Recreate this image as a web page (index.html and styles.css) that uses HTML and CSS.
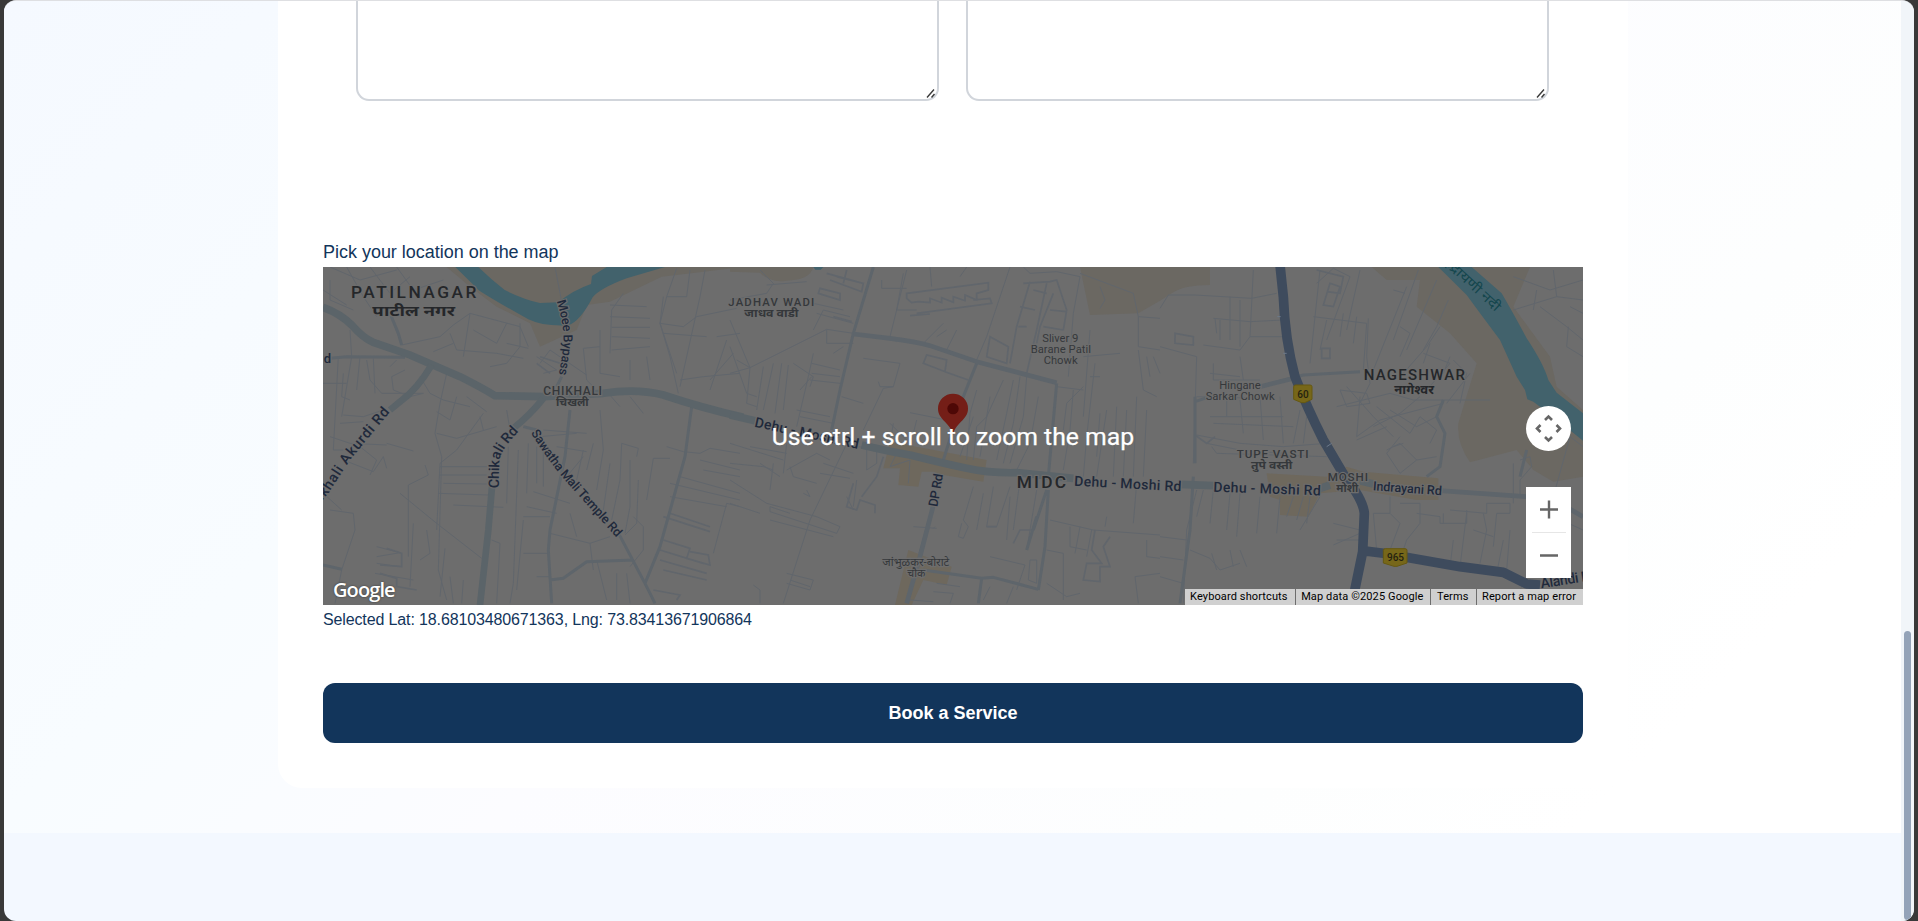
FILE: index.html
```html
<!DOCTYPE html>
<html lang="en">
<head>
<meta charset="utf-8">
<title>Book a Service</title>
<link rel="stylesheet" href="styles.css">
</head>
<body>
<div class="window">
  <main class="page">
    <section class="booking">
      <form class="card">
        <div class="fields">
          <div class="textarea"><svg class="grip" viewBox="0 0 10 10"><path d="M1 9.5 L8 1.5 M5.5 9.5 L8.5 6"/></svg></div>
          <div class="textarea"><svg class="grip" viewBox="0 0 10 10"><path d="M1 9.5 L8 1.5 M5.5 9.5 L8.5 6"/></svg></div>
        </div>
        <div class="label">Pick your location on the map</div>
        <div class="map">
          <svg class="tiles" viewBox="0 0 3780 1014">
            <!-- west -->
            <g transform="translate(-39,-111)">
              <path class="sand" d="M410 111 L1300 111 L1055 140 L900 215 L830 225 L800 300 L690 350 L660 280 L560 230 L480 170 Z"/>
              <path class="water" d="M436 111 L505 111 Q545 150 584 180 Q640 208 690 219 L745 217 Q790 180 843 162 L846 138 L890 111 L1065 111 L950 145 Q870 175 848 202 Q810 275 775 286 Q700 290 655 268 Q560 215 508 182 Z"/>
              <g class="lane">
                <path d="M60 111L150 150L260 120M110 111L160 200L200 260M180 111L240 190L300 140M260 111L310 180L400 150M60 150L60 210L130 240M240 250L275 345L390 320L430 285L480 250L630 290L655 350M39 180L110 225M420 310L440 360L560 370L640 385M490 300L560 340L590 280M370 365L430 340M480 250L460 380M630 280L630 350L590 400L540 410M590 340L655 355"/>
                <path d="M85 380L70 660L100 660M120 300L125 380L95 560M100 430L95 500L120 510M150 380L140 480M190 385L195 490M170 390L180 450L215 490L340 490M39 460L110 460M100 555L160 560L220 540M90 580L160 575M60 620L120 640L230 645M150 650L200 690L180 735M230 640L310 663M100 690L190 725L220 680L230 715M60 840L130 850L135 900L95 1020L75 1120M40 790L95 840"/>
                <path d="M240 410L260 390M285 420L245 440L250 480L300 500L340 490M330 440L360 490L400 510L480 530M410 430L390 520L375 610L395 680L385 1020L410 1110M440 500L420 570L380 545M520 550L440 660L390 700L380 900M470 500L530 545M380 610L440 625L560 590M345 705L355 735L295 765L295 980M270 790L380 880L515 985M390 710L530 710M388 735L530 735M385 790L535 795M400 760L530 762M430 825L580 832M200 950L270 968L200 980M200 1000L270 1010M195 1030L310 1050M310 880L300 1070M350 900L360 970L330 990M405 955L390 1100M420 1040L430 1120M460 1050L455 1120M545 930L570 940L560 1120M595 650L590 820M625 660L610 1060L600 1120M640 870L620 1080M655 640L650 790M680 650L680 760M700 660L700 770M590 540L600 600M510 560L520 600"/>
                <path d="M735 111L755 215M680 380L740 420L700 430M690 400L720 360L830 435M820 355L830 450L850 470M940 190L905 240L900 370M900 225L1010 230M900 260L1020 265M905 292L1020 292M905 320L1020 325M905 360L1020 350M870 300L870 430L930 440M820 355L870 350M960 390L960 450M1010 380L1020 450M895 490L930 530M960 500L1000 550M1100 115L1070 200L1050 280L1080 380L1105 490M1050 280L1120 290L1160 260L1280 235M1185 120L1170 200L1110 470M1060 310L1190 320M1140 120L1130 200L1070 200M1220 320L1290 310M1250 330L1200 480M1060 200L1050 280L1100 430M1270 370L1200 450M1110 450L1180 440L1290 430"/>
                <path d="M700 600L830 610M740 650L830 665M690 620L800 610M820 660L800 750M850 640L830 720M870 540L880 660L860 780M935 640L930 750L905 870M935 640L985 655L980 680M900 700L880 840M960 690L960 830L945 910M985 750L980 880L945 915M1030 685L1010 810M1030 685L1080 685M1070 650L1120 665L1170 670L1200 655L1290 670M1170 690L1290 720M1180 720L1290 740M1110 740L1290 790M1080 760L1290 810M1080 800L1250 830M1290 830L1250 820L1210 970M670 785L780 820M650 830L740 850M640 860L720 860M720 910L840 940L900 920M780 850L800 920M640 970L720 970M840 940L850 1020M860 990L890 1110M970 860L1000 890L1000 960L960 1010M680 1040L720 1040M920 1030L920 1110M950 1030L960 1120M820 680L770 740"/>
                <path class="thick" d="M1060 860L1200 905M1080 850L1200 890M1060 930L1140 955L1130 985L1200 1005L1195 975L1140 965M1050 960L1180 1000M1050 990L1190 1030M1060 1020L1190 1050M1030 1080L1110 1095L1100 1110M230 955L275 970L275 1010L210 1005M210 1030L260 1045L260 1070L320 1080M680 400L720 430M690 380L750 400"/>
              </g>
              <g class="street">
                <path d="M60 385L110 380L285 382M780 540L765 680L720 900L715 960L725 1120M1145 530L1125 680L1050 950L1005 1060M720 1050L760 1045L830 995L970 990M910 880L1005 1060L1035 1120M39 1005L95 1018M755 440L740 470M640 590L680 600M240 250L265 310L275 345"/>
              </g>
              <path class="road" d="M39 232Q90 250 125 285Q160 325 190 337L300 375Q380 410 450 440Q510 470 555 497L700 500L880 490Q980 475 1060 495Q1180 535 1300 562"/>
              <path class="road side" d="M365 405Q320 480 270 515L240 540M700 505Q660 555 610 595M546 770L535 900L510 1125"/>
            </g>
            <!-- centre -->
            <g transform="translate(1221,-111)">
              <path class="sand" d="M0 111H250Q240 150 170 152Q120 160 90 128L0 125ZM1050 111H1440V165Q1360 165 1325 190L1290 212L1225 250L1080 255Z"/>
              <path class="biz" d="M480 635L770 690L760 755L640 735L610 725L575 725L565 770L505 765L510 715L460 715ZM535 960L665 1010L650 1065L580 1050L545 1125H495Z"/>
              <path class="water" d="M250 111H280L272 119H256Z"/>
              <g class="lane">
                <path d="M60 413L290 298L370 310M90 120L130 160L110 190L0 210M20 390L60 413L0 430M0 270L60 413M0 350L50 490L80 500M60 413L50 520L80 530M100 410L80 540M130 400L100 540M155 400L135 550M175 405L160 540M250 370L235 440L200 590M245 400L330 420M245 430L330 440M240 450L330 460M200 540L300 560M210 560L310 580M190 400L250 440L240 470M290 300L290 340L370 340M310 370L340 350M250 300L280 240L360 260M260 250L370 280M250 220L340 240M110 165L230 155M245 440L210 480M335 500L400 520M400 385L510 400L490 470L450 470L445 455M490 470L460 475L400 600"/>
                <path d="M530 120L480 320L500 335M600 111L605 170M710 111L690 140M455 150L455 175L530 175M520 130L500 240L560 240M840 111L770 320L740 390M880 111L900 130L980 125L1050 140L1030 250L1015 440M1110 170L1125 210L1110 235M1050 130L1210 190L1225 260L1290 265M1225 260L1225 350L1290 360M1225 360L1240 480L1280 500M1250 380L1260 440M1270 380L1290 430M1080 300L1060 560M1060 380L1170 370M1095 400L1070 620L1060 740M1080 440L1110 440M1060 480L980 470M1110 550L1100 680M1030 480L1020 600L1000 720M1060 470L1010 520L1000 600M1130 540L1100 740M1160 530L1150 740M1190 540L1180 740M1220 500L1210 740M1250 540L1240 740"/>
                <path d="M820 450L770 560L750 680M850 450L830 550L800 690M870 440L850 580L820 700M890 440L880 560L840 700M780 500L770 560L740 590L730 690M740 480L720 550L710 690M730 560L690 680M925 500L900 640L860 720M540 548L650 570M530 630L480 580M680 300L650 360M640 280L580 340M650 300L620 320M560 570L550 610M490 580L480 640M0 700L100 710L130 720M0 640L160 690M60 650L170 670M90 700L150 740M130 700L120 780M170 640L160 730M280 700L370 730M270 730L360 745M180 710L190 740L260 760M170 720L260 670L300 690M380 650L500 660M410 660L410 720L440 700L440 650M500 670L480 710L540 690M540 690L535 760M380 750L370 830M350 800L370 840M220 790L240 800L230 780"/>
                <path d="M370 600L240 870L160 1120M0 820L90 850M0 750L110 820L260 860L330 890L320 910L120 845L120 830L180 850M120 870L310 920M170 1030L250 1050L240 1080L170 1060M180 1050L240 1070M70 1065L90 1080L90 1120M780 980L885 1005L860 1080M730 770L700 870L715 890L700 925L685 920L695 880M760 790L740 900M790 770L770 890L800 890L840 770M840 800L830 930M870 750L850 900M920 780L890 960M550 890L620 895M610 895L615 890M960 870L1090 900L1290 915M1020 890L1020 950M1050 890L1035 970M1085 900L1070 980M1020 950L1070 960M1130 860L1125 890M1220 760L1210 880M1250 930L1250 980L1290 985M1215 1040L1225 1120M1290 1030L1215 1040M950 960L1000 970L1000 1110M950 1060L1010 1100L1050 1090M900 990L920 990L920 1060L895 1050ZM610 1085L670 1090L660 1120M620 1060L690 1070M540 1110L610 1115M780 1070L760 1110M850 1070L830 1120"/>
                <path class="thick" d="M530 190L775 158L775 180L740 190L740 210L705 195L705 212L670 200L670 217L635 203L635 218L600 205L600 218L565 215L545 218L530 205ZM560 250L785 220L780 205L730 210M540 257L600 252M780 320L835 350L830 400L770 380ZM580 400L590 375L650 390L645 425ZM645 425L715 450M880 160L960 155L980 150L1010 240L1000 300M900 155L860 290L840 400M950 160L920 300L890 430M970 190L930 290L920 340M870 230L915 240M865 290L890 290M910 180L950 190M960 240L1010 245M940 290L1000 300M265 190L330 210L330 190L270 175ZM300 150L395 185L400 160L320 140M290 130L380 155M350 120L340 160M310 260L365 275M370 760L350 830L380 840L390 810L435 825L435 850M395 800L440 740L460 680M1095 900L1085 960L1115 1000L1070 1000L1060 1050L1110 1055L1110 1010L1140 1010L1120 950L1140 920M850 940L870 900L910 900M770 890L800 890"/>
              </g>
              <g class="street">
                <path d="M430 111L370 310L330 480L305 600M740 400L700 500L640 690M980 460L955 740M955 780L945 950L925 1080M610 830L570 970M580 1020L755 1045L790 1042L925 1078M755 1045L745 1120M920 860L890 960M910 900L950 780"/>
                <path class="street-wide" d="M370 312L480 325Q560 335 600 347L740 395L980 458M609 830L570 980L530 1120"/>
              </g>
              <path class="road" d="M0 555L75 572M395 645Q480 665 540 675Q640 700 710 715T860 728L1030 745"/>
            </g>
            <!-- east -->
            <g transform="translate(2511,-111)">
              <path class="sand" d="M635 111H1110L1060 230L1170 380L1190 470L1269 540V740L1180 755L1120 720L1070 660L930 697Q890 640 895 580L950 400L870 310L770 230L780 150L680 150Z"/>
              <path class="biz" d="M320 730L500 740L560 710L610 725L835 745L835 810L770 810L600 780L480 790L445 860L360 855L360 810L330 800Z"/>
              <path class="water" d="M835 111H935L1025 190Q1060 250 1100 325Q1150 400 1165 450L1190 488L1269 550V632L1180 560L1120 515L1102 508L1095 480L1070 440L1020 330Q960 250 920 195Z"/>
              <g class="lane">
                <path d="M0 235L25 195L105 195L275 205L350 190M280 120L270 320M160 265L270 275L370 270M165 265L170 310M180 270L180 330M130 345L240 360L270 320L370 320M210 200L210 330M240 210L240 350M0 350L110 380L100 700M240 380L250 450M160 400L160 450L300 450M150 430L240 440M110 500L300 505M200 500L200 560M240 510L250 610M300 500L310 630M150 560L370 560M160 580L400 590M360 500L370 640M420 540L400 640M440 560L430 640M480 120L450 400M470 160L520 115L570 140L500 330M600 120L560 300M460 260L620 280L610 420M500 270L480 360M550 250L540 320M590 260L580 340M625 265L620 380M740 170L640 420M775 120L700 330M830 150L740 360M865 210L830 290L790 360M700 180L735 190M620 380L630 460L600 520M720 290L750 310L720 380M840 290L800 350L730 430M790 370L870 400L800 480M870 380L850 430M810 340L790 400M880 390L920 430L900 520M930 430L860 520"/>
                <path d="M540 480L620 490L630 520L560 530ZM560 470L640 560L700 620M530 530L690 490L760 510L990 510M600 500L590 620L660 570L850 520M650 530L750 610L780 560M690 540L770 590L830 560M640 590L720 550L780 500M590 630L680 590M780 560L830 600L810 640M720 620L680 670L720 730L770 690L720 640L680 660M700 650L730 640M770 690L830 680M110 615L240 640L370 650L500 640M140 640L240 660L370 670M155 650L170 670L500 680M110 780L80 900L70 1120M0 920L80 930M0 1040L70 1060M0 980L70 990M130 780L110 860M160 780L150 880M210 790L200 900M240 790L230 920M300 800L290 910M360 800L350 910M400 800L380 860M430 800L410 870M450 800L440 880M480 800L420 900M90 960L150 985L180 1020L240 1000M155 970L170 1020M210 960L220 1010M240 960L260 1010M520 880L600 900M530 930L600 930M520 945L600 910"/>
                <path d="M690 800L690 850L640 850M690 850L720 880L690 960M720 820L780 820L780 880L740 930L730 960M640 850L650 960M770 850L840 860L840 880L920 880L920 840M850 850L850 880M870 840L980 850L980 820L1050 820L1050 850L1010 850L1000 950M970 850L980 900L960 1000M920 850L900 1010M880 930L870 1010M1030 930L1010 1030M1050 900L1040 1020M940 900L1000 920M1080 690L1110 680L1115 710L1080 750L1080 800M1060 700L1060 820M1200 650L1230 620L1269 650M1230 620L1180 800M1060 140L1170 180L1269 150M1180 120L1190 200L1060 240M1130 180L1120 240M1190 200L1269 210M1140 230L1220 290L1269 330M1225 290L1220 350L1269 380M1230 230L1269 250M1080 1080L1160 940M1160 850L1269 900"/>
                <path class="thick" d="M45 310L100 320L100 345L45 340ZM510 160L540 170L520 230L490 225ZM485 355L510 355L510 385L485 385ZM105 615L140 640L165 620M470 120L550 140L540 190L500 185"/>
              </g>
              <g class="street">
                <path d="M105 500L105 700M300 470L430 435L600 425M850 510L830 560L855 610L840 710L800 740M60 1120L90 900L100 740M105 515L150 500M1100 660L1080 740"/>
                <path class="street-wide" d="M300 470L420 440M840 782L1100 800M1200 820L1269 860"/>
              </g>
              <path class="road" d="M60 763L160 767M480 775L510 765M600 752L640 762"/>
              <path class="highway" d="M360 105L370 200Q375 330 405 440Q440 530 490 630L555 740Q610 810 613 850L608 965L575 1125M610 962L670 970L900 1010L1030 1027L1100 1062L1140 1065"/>
              <path class="lines" d="M500 650L515 640M352 260H362M370 370H380"/>
              <path class="shield" d="M401 470q0-5 6-5h43q6 0 6 5v38l-22 10h-9l-24-10zM670 961q0-5 6-5h59q6 0 6 5v38l-30 10h-9l-32-10z"/>
            </g>
            <g transform="translate(-39,-111)" class="town">
              <text x="123" y="205" font-size="52" textLength="376">PATILNAGAR</text>
              <text class="hindi" x="187" y="257" font-size="42" textLength="248" lengthAdjust="spacingAndGlyphs">पाटील नगर</text>
              <text class="dim" x="700" y="496" font-size="36" textLength="176">CHIKHALI</text>
              <text class="dim hindi" x="738" y="527" font-size="33" textLength="98" lengthAdjust="spacingAndGlyphs">चिखली</text>
              <text class="dim" x="1255" y="227" font-size="34" textLength="258">JADHAV WADI</text>
              <text class="dim hindi" x="1303" y="261" font-size="33" textLength="162" lengthAdjust="spacingAndGlyphs">जाधव वाडी</text>
              <text class="street-name" x="41" y="399" font-size="39">d</text>
            </g>
            <g transform="translate(-39,-111)" class="street-name">
              <path id="moee" class="guide" d="M740 214Q768 300 758 360Q753 400 746 438"/>
              <path id="akurdi" class="guide" d="M36 812L55 790L120 690L245 540"/>
              <path id="chikali" class="guide" d="M566 775L568 690Q575 655 635 595"/>
              <path id="sawatha" class="guide" d="M662 608Q713 692 768 754T928 932"/>
              <text font-size="38"><textPath href="#moee" textLength="222">Moee Bypass</textPath></text>
              <text font-size="43"><textPath href="#akurdi" textLength="336">ikhali Akurdi Rd</textPath></text>
              <text font-size="43"><textPath href="#chikali" textLength="190">Chikali Rd</textPath></text>
              <text font-size="38"><textPath href="#sawatha" textLength="408">Sawatha Mali Temple Rd</textPath></text>
            </g>
            <g transform="translate(1221,-111)">
              <path id="dehu" class="guide" d="M72 590L385 657"/>
              <text class="street-name" font-size="42"><textPath href="#dehu" textLength="318">Dehu - Moshi Rd</textPath></text>
              <text class="street-name" font-size="39" textLength="100" transform="translate(622,832) rotate(-80)">DP Rd</text>
              <text class="street-name" font-size="42" textLength="322" transform="translate(1032,767) rotate(3)">Dehu - Moshi Rd</text>
              <text class="town" x="860" y="773" font-size="52" textLength="148">MIDC</text>
              <g class="place">
                <text x="937" y="335" textLength="108">Sliver 9</text>
                <text x="902" y="369" textLength="181">Barane Patil</text>
                <text x="941" y="403" textLength="102">Chowk</text>
                <text x="457" y="1008" textLength="201" lengthAdjust="spacingAndGlyphs">जांभुळकर-बोराटे</text>
                <text x="532" y="1042" textLength="54" lengthAdjust="spacingAndGlyphs">चौक</text>
              </g>
              <path class="pin" d="M669 616C665 580 624 570 624 536A45 45 0 0 1 714 536C714 570 673 580 669 616Z"/>
              <circle class="pin-dot" cx="669" cy="536" r="17"/>
            </g>
            <g transform="translate(2511,-111)">
              <g class="town">
                <text x="611" y="451" font-size="45" textLength="304">NAGESHWAR</text>
                <text class="hindi" x="703" y="493" font-size="40" textLength="119" lengthAdjust="spacingAndGlyphs">नागेश्वर</text>
                <text class="dim" x="230" y="685" font-size="35" textLength="216">TUPE VASTI</text>
                <text class="dim hindi" x="273" y="718" font-size="33" textLength="124" lengthAdjust="spacingAndGlyphs">तुपे वस्ती</text>
                <text class="dim" x="503" y="753" font-size="35" textLength="121">MOSHI</text>
                <text class="dim hindi" x="529" y="785" font-size="33" textLength="66" lengthAdjust="spacingAndGlyphs">मोशी</text>
              </g>
              <g class="place">
                <text x="178" y="478" textLength="124">Hingane</text>
                <text x="137" y="511" textLength="207">Sarkar Chowk</text>
              </g>
              <g class="street-name">
                <text font-size="42" textLength="322" transform="translate(160,785) rotate(2)">Dehu - Moshi Rd</text>
                <text font-size="38" textLength="207" transform="translate(638,781) rotate(4)">Indrayani Rd</text>
                <text font-size="43" textLength="150" transform="translate(1144,1075) rotate(-9)">Alandi R</text>
              </g>
              <text class="river" font-size="40" textLength="214" lengthAdjust="spacingAndGlyphs" transform="translate(850,100) rotate(43)">इंद्रायणी नदी</text>
              <text class="route" x="412" y="503">60</text>
              <text class="route" x="681" y="993">965</text>
            </g>
          </svg>
          <div class="hint">Use ctrl + scroll to zoom the map</div>
          <div class="google">Google</div>
          <svg class="pan" viewBox="0 0 45 45"><circle cx="22.5" cy="22.5" r="22.5"/><path d="M19 14L22.5 10.5L26 14M19 31L22.5 34.5L26 31M14.5 19L11 22.5L14.5 26M30.5 19L34 22.5L30.5 26"/></svg>
          <svg class="zoom" viewBox="0 0 45 91"><path class="zoom-sign" d="M14 22.5H32M23 13.5V31.5M14 68.5H32"/><path class="zoom-rule" d="M6 45.5H40"/></svg>
          <div class="legal"><span>Keyboard shortcuts</span><span>Map data ©2025 Google</span><span>Terms</span><span>Report a map error</span></div>
        </div>
        <div class="coords">Selected Lat: 18.68103480671363, Lng: 73.83413671906864</div>
        <button class="submit" type="button">Book a Service</button>
      </form>
    </section>
  </main>
  <div class="scrollbar"><div class="thumb"></div></div>
</div>
</body>
</html>
```
FILE: styles.css
```css
* { box-sizing: border-box; }
body { margin: 0; background: #393939; font-family: "Liberation Sans", Arial, sans-serif; color: #12355b; }
.window { display: flex; height: 921px; margin: 0 4px; border-top: 1px solid #dedfe2; border-radius: 12px; overflow: hidden; background: #f3f8ff; }
.page { flex: 1; }
.booking { height: 832px; padding: 0 273px 0 274px; background: linear-gradient(135deg, #f5f9ff 0%, #f8fcff 30%, #fcfcff 48%, #fdfefe 75%, #fff 88%); }
.card { height: 787px; padding: 0 45px; background: #fff; border-radius: 0 0 24px 24px; }
.fields { display: flex; gap: 27px; padding: 0 34px 0 33px; }
.textarea { flex: 1; display: flex; align-items: flex-end; justify-content: flex-end; height: 100px; padding: 0 1px 1px 0; border: 2px solid #d1d5db; border-top: 0; border-radius: 0 0 13px 13px; }
.grip { width: 10px; height: 10px; fill: none; stroke: #3b3b3b; stroke-width: 1.4; }
.label { margin-top: 140px; height: 26px; font-size: 18px; line-height: 22px; letter-spacing: -.02px; }
.map { position: relative; height: 338px; background: #6d6d6d; overflow: hidden; font-family: Roboto, sans-serif; }
.tiles { display: block; width: 1260px; height: 338px; fill: none; }
.sand { fill: #6b6862; }
.biz { fill: #6e685d; }
.water { fill: #42626c; }
.lane { stroke: #61666c; stroke-width: 3; }
.thick { stroke-width: 5; }
.street { stroke: #5e656b; stroke-width: 9; stroke-linejoin: round; }
.street-wide { stroke-width: 14; }
.road { stroke: #5b6469; stroke-width: 23; }
.side { stroke-width: 20; }
.highway { stroke: #3e4b5d; stroke-width: 29; stroke-linejoin: round; }
.lines { stroke: #6d7a8b; stroke-width: 3; }
.shield { fill: #776719; stroke: #665812; stroke-width: 3; }
.tiles text { font-family: Roboto, "Noto Sans", "Noto Sans Devanagari", sans-serif; stroke: #6d6d6d; stroke-width: 7; paint-order: stroke; }
.town { fill: #25272a; font-weight: 500; }
.dim { fill: #35383b; }
.hindi { font-weight: 700; }
.place { fill: #35383b; font-size: 34px; }
.street-name, .tiles .street-name { fill: #1f293b; font-weight: 500; }
.guide { fill: none; }
.tiles .river { fill: #14464d; stroke: none; }
.tiles .route { fill: #25220f; stroke: none; font-size: 30px; font-weight: 500; }
.pin { fill: #741e17; }
.pin-dot { fill: #4e0806; }
.hint { position: absolute; top: 155px; left: 0; width: 100%; text-align: center; font-size: 24.75px; line-height: 30px; color: #fff; -webkit-text-stroke: .25px #fff; }
.google { position: absolute; left: 10px; bottom: 3px; font: 600 20px/24px "Open Sans", sans-serif; letter-spacing: -.9px; color: #fff; text-shadow: 0 0 2px #333; }
.pan { position: absolute; top: 139px; right: 12px; width: 45px; height: 45px; fill: #fff; }
.pan path { fill: none; stroke: #666; stroke-width: 2.6; }
.zoom { position: absolute; top: 220px; right: 12px; width: 45px; height: 91px; background: #fff; }
.zoom-sign { stroke: #666; stroke-width: 2.4; }
.zoom-rule { stroke: #e6e6e6; }
.legal { position: absolute; right: 0; bottom: 0; display: flex; height: 16px; font-size: 11px; line-height: 15px; letter-spacing: .12px; color: #000; background: #d0d0d0; }
.legal span { padding: 0 7px 0 5.5px; white-space: nowrap; }
.legal span + span { border-left: 1px solid #6d6d6d; }
.coords { padding-top: 5px; font-size: 16px; line-height: 20px; letter-spacing: -.13px; }
.submit { display: block; width: 100%; height: 60px; margin-top: 53px; border: 0; border-radius: 12px; background: #12355b; color: #fff; font: bold 18px/28px "Liberation Sans", Arial, sans-serif; }
.scrollbar { display: flex; align-items: flex-end; width: 13px; padding: 0 3px 1px; background: #f1f5f9; }
.thumb { width: 7px; height: 289px; border-radius: 4px; background: #94a3b8; }
```
